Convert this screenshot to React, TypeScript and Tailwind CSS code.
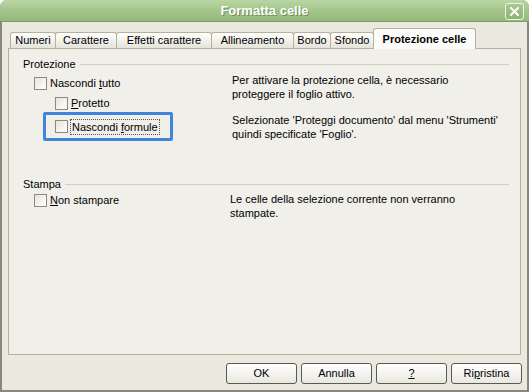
import React from 'react';

const font = { fontFamily: '"Liberation Sans", Arial, sans-serif' };

// XP style checkbox
function Box() {
  return (
    <span className="inline-block w-[13px] h-[13px] border border-[#8e8a78] bg-gradient-to-br from-[#e6e4dc] to-white shrink-0" />
  );
}

function Header({ label }: { label: string }) {
  return (
    <div className="flex items-center h-[13px] pl-[14px] pr-[11px]">
      <span className="text-[11px] leading-[13px] text-black mr-[4px]">{label}</span>
      <div className="flex-1 h-px bg-[#d0d0bf]" />
    </div>
  );
}

function Tab({ label, w, active }: { label: string; w: number; active?: boolean }) {
  if (active) {
    return (
      <div
        className="h-[21px] mb-[-1px] -ml-[1px] border border-b-0 border-[#b3b29b] rounded-t-[3px] bg-[#fbfbf9] relative z-10 flex items-center justify-center text-[11px] font-bold text-black"
        style={{ width: w }}
      >
        {label}
      </div>
    );
  }
  return (
    <div
      className="h-[16px] -ml-[1px] first:ml-0 border border-b-0 border-[#b3b29b] rounded-t-[3px] bg-gradient-to-b from-white to-[#e5e3d9] flex items-center justify-center text-[11px] text-black"
      style={{ width: w }}
    >
      {label}
    </div>
  );
}

function Btn({ children }: { children: React.ReactNode }) {
  return (
    <button className="w-[71px] h-[21px] rounded-[3px] border border-[#555c4b] bg-gradient-to-b from-white to-[#e9e7df] text-[11px] text-black flex items-center justify-center">
      {children}
    </button>
  );
}

export default function App() {
  return (
    <div className="w-[529px] h-[392px] flex flex-col bg-[#8a877e] rounded-t-[7px] overflow-hidden" style={font}>
      {/* title bar */}
      <div className="h-[22px] shrink-0 relative flex items-center justify-center bg-gradient-to-b from-[#b9d6a4] via-[#a3c58a] to-[#94b97b] border-b border-[#7e9d68]">
        <span className="text-[13px] font-bold text-white" style={{ textShadow: '1px 1px 0 #6f8f5a' }}>
          Formatta celle
        </span>
        <div className="absolute right-[5px] top-[3px] w-[19px] h-[17px] rounded-[3px] border border-[#eef5e8] bg-gradient-to-b from-[#a8c893] to-[#8db374] flex items-center justify-center">
          <svg width="9" height="9" viewBox="0 0 9 9">
            <path d="M1 1 L8 8 M8 1 L1 8" stroke="white" strokeWidth="2" strokeLinecap="square" />
          </svg>
        </div>
      </div>

      {/* body */}
      <div className="flex-1 flex flex-col mx-[2px] mb-[2px] bg-[#ebe8df]">
        <div className="flex items-end h-[26px] pl-[8px] pt-[7px]">
          <Tab label="Numeri" w={46} />
          <Tab label="Carattere" w={62} />
          <Tab label="Effetti carattere" w={96} />
          <Tab label="Allineamento" w={83} />
          <Tab label="Bordo" w={38} />
          <Tab label="Sfondo" w={44} />
          <Tab label="Protezione celle" w={103} active />
        </div>

        <div className="ml-[6px] w-[513px] h-[307px] border border-[#b3b29b] bg-[#f1efe9] flex flex-col pt-[9px] text-[11px] leading-[14px] text-black">
          <Header label="Protezione" />
          <div className="flex mt-[1px]">
            <div className="w-[223px] flex flex-col pl-[25px]">
              <div className="flex items-center h-[14px] mt-[4px]">
                <Box />
                <span className="ml-[3px]">Nascondi <u>t</u>utto</span>
              </div>
              <div className="flex items-center h-[14px] mt-[6px] ml-[21px]">
                <Box />
                <span className="ml-[3px]"><u>P</u>rotetto</span>
              </div>
              <div className="mt-[2px] ml-[9px] w-[130px] h-[29px] border-[3px] border-[#4084dc] rounded-[2px] flex items-center pl-[9px]">
                <Box />
                <span className="ml-[2px] px-[1px] border border-dotted border-[#555]">
                  Nascondi <u>f</u>ormule
                </span>
              </div>
            </div>
            <div className="flex flex-col">
              <div className="mt-[1px]">
                Per attivare la protezione cella, è necessario
                <br />
                proteggere il foglio attivo.
              </div>
              <div className="mt-[12px]">
                Selezionate 'Proteggi documento' dal menu 'Strumenti'
                <br />
                quindi specificate 'Foglio'.
              </div>
            </div>
          </div>

          <div className="mt-[37px]">
            <Header label="Stampa" />
          </div>
          <div className="flex">
            <div className="w-[221px] pl-[25px]">
              <div className="flex items-center h-[14px] mt-[2px]">
                <Box />
                <span className="ml-[3px]"><u>N</u>on stampare</span>
              </div>
            </div>
            <div className="mt-[1px]">
              Le celle della selezione corrente non verranno
              <br />
              stampate.
            </div>
          </div>
        </div>

        <div className="flex justify-end gap-[4px] pr-[5px] mt-[8px]">
          <Btn>OK</Btn>
          <Btn>Annulla</Btn>
          <Btn><u>?</u></Btn>
          <Btn>Ri<u>p</u>ristina</Btn>
        </div>
      </div>
    </div>
  );
}
